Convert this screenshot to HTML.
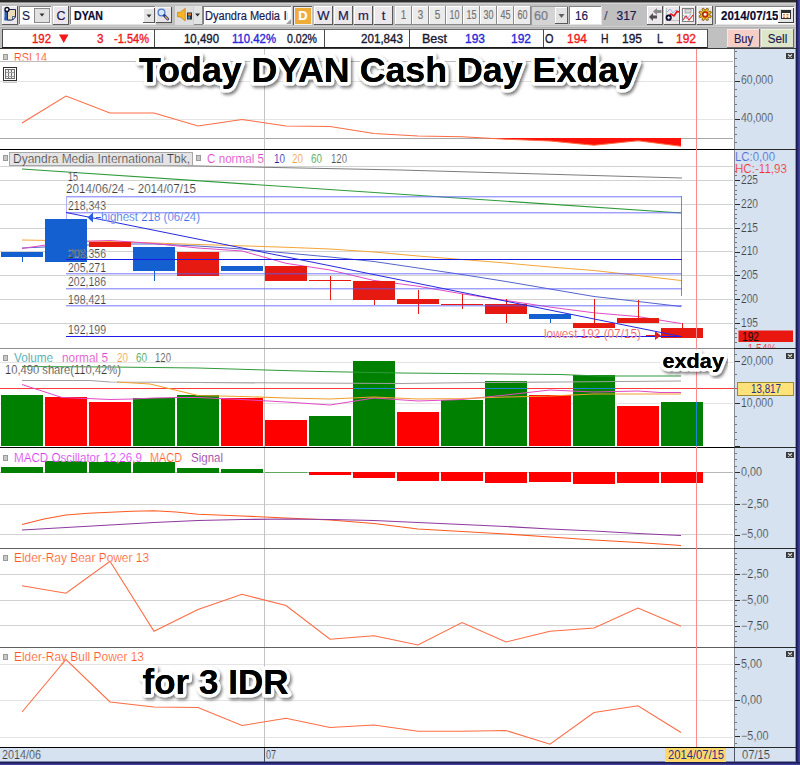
<!DOCTYPE html>
<html><head><meta charset="utf-8"><title>DYAN chart</title>
<style>html,body{margin:0;padding:0;background:#fff}body{width:800px;height:765px;overflow:hidden}svg{display:block;font-family:'Liberation Sans', sans-serif}</style>
</head><body>
<svg width="800" height="765" viewBox="0 0 800 765">
<defs><filter id="sh" x="-5%" y="-20%" width="110%" height="150%"><feDropShadow dx="1.8" dy="2.4" stdDeviation="1.8" flood-color="#000" flood-opacity="0.5"/></filter></defs>
<rect x="0" y="0" width="800" height="765" fill="#ffffff" />
<g shape-rendering="crispEdges">
<rect x="0" y="0" width="800" height="49" fill="#c0c0c0" />
<rect x="0" y="0" width="800" height="2" fill="#2c2c2c" />
<rect x="0" y="2" width="800" height="1" fill="#8a8a8a" />
<rect x="0" y="3" width="800" height="1" fill="#d4d4d4" />
<rect x="0" y="26" width="800" height="1" fill="#d0d0d0" />
<rect x="0" y="27" width="800" height="1" fill="#b0b0b0" />
<rect x="734" y="49" width="62" height="713" fill="#d6e2f0" />
<rect x="0" y="748" width="796" height="14" fill="#d6e2f0" />
<rect x="796" y="0" width="1" height="765" fill="#1a1a4e" />
<rect x="797" y="0" width="1" height="765" fill="#26266c" />
<rect x="798" y="0" width="1" height="765" fill="#343488" />
<rect x="799" y="0" width="1" height="765" fill="#44449c" />
<rect x="0" y="762" width="800" height="1" fill="#1c1c52" />
<rect x="0" y="763" width="800" height="1" fill="#2c2c78" />
<rect x="0" y="764" width="800" height="1" fill="#40409a" />
<rect x="795" y="49" width="1" height="713" fill="#8a94c0" />
<rect x="0" y="761" width="796" height="1" fill="#8088b0" />
<rect x="0" y="61" width="733" height="1" fill="#bdbdbd" />
<rect x="0" y="81" width="733" height="1" fill="#e4e4e4" />
<rect x="0" y="119" width="733" height="1" fill="#e4e4e4" />
<rect x="0" y="138" width="733" height="1" fill="#a8a8a8" />
<rect x="0" y="166" width="733" height="1" fill="#d2d2d2" />
<rect x="0" y="180" width="733" height="1" fill="#d2d2d2" />
<rect x="0" y="204" width="733" height="1" fill="#d2d2d2" />
<rect x="0" y="228" width="733" height="1" fill="#d2d2d2" />
<rect x="0" y="251" width="733" height="1" fill="#d2d2d2" />
<rect x="0" y="275" width="733" height="1" fill="#d2d2d2" />
<rect x="0" y="299" width="733" height="1" fill="#d2d2d2" />
<rect x="0" y="323" width="733" height="1" fill="#d2d2d2" />
<rect x="0" y="362" width="733" height="1" fill="#e4e4e4" />
<rect x="0" y="403" width="733" height="1" fill="#e4e4e4" />
<rect x="0" y="472" width="733" height="1" fill="#b8b8b8" />
<rect x="0" y="504" width="733" height="1" fill="#d2d2d2" />
<rect x="0" y="534" width="733" height="1" fill="#d2d2d2" />
<rect x="0" y="574" width="733" height="1" fill="#d2d2d2" />
<rect x="0" y="600" width="733" height="1" fill="#d2d2d2" />
<rect x="0" y="625" width="733" height="1" fill="#d2d2d2" />
<rect x="0" y="664" width="733" height="1" fill="#e4e4e4" />
<rect x="0" y="700" width="733" height="1" fill="#e4e4e4" />
<rect x="0" y="737" width="733" height="1" fill="#e4e4e4" />
<rect x="264" y="49" width="1" height="713" fill="#c4c4c4" />
</g>
<g shape-rendering="crispEdges">
</g>
<polygon points="484,138 506,139.2 550,141 594,145.2 638,140.8 681,146.2 681,138" fill="#ff1008"/>
<polyline points="22,123 66,96 110,113 154,113 198,126 242,119.5 286,126 330,126.5 374,133.5 418,136 462,136.8 506,139.2 550,141 594,145.2 638,140.8 681,146.2" fill="none" stroke="#ff6c44" stroke-width="1.1" />
<g shape-rendering="crispEdges">
<rect x="0" y="149" width="734" height="1" fill="#000000" />
</g>
<rect x="3" y="54" width="5" height="6" fill="#9a9a9a" />
<rect x="4" y="55" width="3" height="4" fill="#c8c8c8" />
<clipPath id="c1"><rect x="0" y="49" width="200" height="11.5"/></clipPath>
<text x="14" y="62.2" font-size="13.5" fill="#ff4a18" font-weight="normal" text-anchor="start" textLength="33" lengthAdjust="spacingAndGlyphs" clip-path="url(#c1)" stroke="#ffffff" stroke-width="0.18">RSI 14</text>
<rect x="3.5" y="67.5" width="13" height="13" fill="#ffffff" stroke="#303030" stroke-width="1"/>
<rect x="5.5" y="69.5" width="9" height="9" fill="#f0f0f0" stroke="#707070" stroke-width="1"/>
<rect x="8" y="70" width="1" height="8" fill="#707070" />
<rect x="11" y="70" width="1" height="8" fill="#707070" />
<rect x="6" y="72" width="8" height="1" fill="#a0a0a0" />
<rect x="6" y="76" width="8" height="1" fill="#a0a0a0" />
<rect x="3" y="82" width="14" height="1" fill="#c8c8c8" />
<polyline points="22,163.5 200,166 400,170 682,178" fill="none" stroke="#7c7c7c" stroke-width="1" />
<polyline points="22,169 682,213" fill="none" stroke="#2e9a3a" stroke-width="1.1" />
<polyline points="22,240 110,241.5 198,244.5 286,247.2 330,249 374,252 418,256 462,259.5 506,263 550,267 594,270.5 638,275.5 681,280.5" fill="none" stroke="#f4a63a" stroke-width="1.1" />
<polyline points="22,248 66,246 110,244 154,244 198,246 242,249 286,253 330,257 374,261.5 418,268 462,274.5 506,281.5 550,289 594,296.5 638,301.5 681,306.5" fill="none" stroke="#5464cc" stroke-width="1" />
<polyline points="22,248.5 66,242 110,240.5 154,243.5 198,248 242,251 286,263.3 330,270 374,280.5 418,286.2 462,293.8 506,300.5 550,307.1 594,312.8 638,316.6 681,323.5" fill="none" stroke="#e24ac4" stroke-width="1" />
<g shape-rendering="crispEdges">
<rect x="22" y="252" width="1" height="10" fill="#1560d0" />
<rect x="1" y="252" width="42" height="5" fill="#1560d0" />
<rect x="66" y="219" width="1" height="43" fill="#1560d0" />
<rect x="45" y="219" width="42" height="43" fill="#1560d0" />
<rect x="110" y="242" width="1" height="5" fill="#e61a10" />
<rect x="89" y="242" width="42" height="5" fill="#e61a10" />
<rect x="154" y="247" width="1" height="34" fill="#1560d0" />
<rect x="133" y="247" width="42" height="24" fill="#1560d0" />
<rect x="198" y="252" width="1" height="24" fill="#e61a10" />
<rect x="177" y="252" width="42" height="24" fill="#e61a10" />
<rect x="242" y="266" width="1" height="5" fill="#1560d0" />
<rect x="221" y="266" width="42" height="5" fill="#1560d0" />
<rect x="286" y="266" width="1" height="15" fill="#e61a10" />
<rect x="265" y="266" width="42" height="15" fill="#e61a10" />
<rect x="330" y="276" width="1" height="24" fill="#e61a10" />
<rect x="309" y="280" width="42" height="1" fill="#e61a10" />
<rect x="374" y="281" width="1" height="24" fill="#e61a10" />
<rect x="353" y="281" width="42" height="19" fill="#e61a10" />
<rect x="418" y="290" width="1" height="24" fill="#e61a10" />
<rect x="397" y="299" width="42" height="5" fill="#e61a10" />
<rect x="462" y="294" width="1" height="15" fill="#e61a10" />
<rect x="441" y="304" width="42" height="1" fill="#e61a10" />
<rect x="506" y="299" width="1" height="24" fill="#e61a10" />
<rect x="485" y="304" width="42" height="10" fill="#e61a10" />
<rect x="550" y="314" width="1" height="9" fill="#1560d0" />
<rect x="529" y="314" width="42" height="5" fill="#1560d0" />
<rect x="594" y="299" width="1" height="29" fill="#e61a10" />
<rect x="573" y="323" width="42" height="5" fill="#e61a10" />
<rect x="638" y="300" width="1" height="23" fill="#e61a10" />
<rect x="617" y="318" width="42" height="5" fill="#e61a10" />
<rect x="682" y="323" width="1" height="15" fill="#e61a10" />
<rect x="661" y="328" width="42" height="10" fill="#e61a10" />
</g>
<g shape-rendering="crispEdges">
<rect x="66" y="196" width="616" height="1" fill="#5a5afa" fill-opacity="0.58"/>
<rect x="66" y="197" width="616" height="1" fill="#5a5afa" fill-opacity="0.26"/>
<rect x="66" y="212" width="616" height="1" fill="#5a5afa" fill-opacity="0.58"/>
<rect x="66" y="213" width="616" height="1" fill="#5a5afa" fill-opacity="0.26"/>
<rect x="66" y="196" width="1" height="23" fill="#b0b0fc" />
<rect x="681" y="196" width="1" height="100" fill="#7c7cf4" />
<rect x="66" y="259" width="616" height="1" fill="#1c1ce8" />
<rect x="66" y="273" width="616" height="1" fill="#5a5afa" fill-opacity="0.58"/>
<rect x="66" y="274" width="616" height="1" fill="#5a5afa" fill-opacity="0.26"/>
<rect x="66" y="288" width="616" height="1" fill="#5a5afa" fill-opacity="0.58"/>
<rect x="66" y="289" width="616" height="1" fill="#5a5afa" fill-opacity="0.26"/>
<rect x="66" y="305" width="616" height="1" fill="#5a5afa" fill-opacity="0.58"/>
<rect x="66" y="306" width="616" height="1" fill="#5a5afa" fill-opacity="0.26"/>
<rect x="66" y="336" width="616" height="1" fill="#1c1ce8" />
</g>
<polyline points="66,212.5 681,336.5" fill="none" stroke="#2828e0" stroke-width="1" />
<rect x="3" y="155" width="5" height="6" fill="#9a9a9a" />
<rect x="4" y="156" width="3" height="4" fill="#c8c8c8" />
<rect x="9.5" y="152.5" width="183" height="13" fill="#e4e4e4" stroke="#a8a8a8" stroke-width="1"/>
<text x="13" y="163" font-size="12" fill="#3c3c3c" font-weight="normal" text-anchor="start" textLength="177" lengthAdjust="spacingAndGlyphs"  stroke="#ffffff" stroke-width="0.18">Dyandra Media International Tbk,</text>
<rect x="196" y="155" width="5" height="6" fill="#9a9a9a" />
<rect x="197" y="156" width="3" height="4" fill="#c8c8c8" />
<text x="207" y="163" font-size="12" fill="#e040c8" font-weight="normal" text-anchor="start" textLength="57" lengthAdjust="spacingAndGlyphs"  stroke="#ffffff" stroke-width="0.18">C normal 5</text>
<text x="274" y="163" font-size="12" fill="#2828a8" font-weight="normal" text-anchor="start" textLength="11" lengthAdjust="spacingAndGlyphs"  stroke="#ffffff" stroke-width="0.18">10</text>
<text x="292" y="163" font-size="12" fill="#f0a040" font-weight="normal" text-anchor="start" textLength="11" lengthAdjust="spacingAndGlyphs"  stroke="#ffffff" stroke-width="0.18">20</text>
<text x="311" y="163" font-size="12" fill="#30a040" font-weight="normal" text-anchor="start" textLength="11" lengthAdjust="spacingAndGlyphs"  stroke="#ffffff" stroke-width="0.18">60</text>
<text x="331" y="163" font-size="12" fill="#505050" font-weight="normal" text-anchor="start" textLength="16" lengthAdjust="spacingAndGlyphs"  stroke="#ffffff" stroke-width="0.18">120</text>
<text x="68" y="181" font-size="12" fill="#3c3c3c" font-weight="normal" text-anchor="start" textLength="10" lengthAdjust="spacingAndGlyphs"  stroke="#ffffff" stroke-width="0.18">15</text>
<text x="66" y="193" font-size="12" fill="#3c3c3c" font-weight="normal" text-anchor="start" textLength="130" lengthAdjust="spacingAndGlyphs"  stroke="#ffffff" stroke-width="0.18">2014/06/24 ~ 2014/07/15</text>
<text x="68" y="210" font-size="12" fill="#3c3c3c" font-weight="normal" text-anchor="start" textLength="38" lengthAdjust="spacingAndGlyphs"  stroke="#ffffff" stroke-width="0.18">218,343</text>
<text x="68" y="257.5" font-size="12" fill="#3c3c3c" font-weight="normal" text-anchor="start" textLength="38" lengthAdjust="spacingAndGlyphs"  stroke="#ffffff" stroke-width="0.18">208,356</text>
<text x="68" y="271.5" font-size="12" fill="#3c3c3c" font-weight="normal" text-anchor="start" textLength="38" lengthAdjust="spacingAndGlyphs"  stroke="#ffffff" stroke-width="0.18">205,271</text>
<text x="68" y="285.5" font-size="12" fill="#3c3c3c" font-weight="normal" text-anchor="start" textLength="38" lengthAdjust="spacingAndGlyphs"  stroke="#ffffff" stroke-width="0.18">202,186</text>
<text x="68" y="303.5" font-size="12" fill="#3c3c3c" font-weight="normal" text-anchor="start" textLength="38" lengthAdjust="spacingAndGlyphs"  stroke="#ffffff" stroke-width="0.18">198,421</text>
<text x="68" y="334" font-size="12" fill="#3c3c3c" font-weight="normal" text-anchor="start" textLength="38" lengthAdjust="spacingAndGlyphs"  stroke="#ffffff" stroke-width="0.18">192,199</text>
<polygon points="87.5,217.5 93,212.5 93,222.5" fill="#2a5ee0"/>
<rect x="96" y="217" width="5" height="1" fill="#2a5ee0" />
<text x="101" y="221" font-size="12" fill="#3a6ae4" font-weight="normal" text-anchor="start" textLength="99" lengthAdjust="spacingAndGlyphs"  stroke="#ffffff" stroke-width="0.18">highest 218 (06/24)</text>
<text x="544" y="338" font-size="12" fill="#f65252" font-weight="normal" text-anchor="start" textLength="97" lengthAdjust="spacingAndGlyphs"  stroke="#ffffff" stroke-width="0.18">lowest 192 (07/15)</text>
<rect x="646" y="335" width="10" height="1" fill="#e02020" />
<polygon points="661,335.5 655,331 655,340" fill="#e02020"/>
<g shape-rendering="crispEdges">
<rect x="0" y="348" width="734" height="1" fill="#909090" />
<rect x="1" y="395" width="42" height="51" fill="#008000" />
<rect x="45" y="397" width="42" height="49" fill="#ff0000" />
<rect x="89" y="402" width="42" height="44" fill="#ff0000" />
<rect x="133" y="398" width="42" height="48" fill="#008000" />
<rect x="177" y="395" width="42" height="51" fill="#008000" />
<rect x="221" y="398" width="42" height="48" fill="#ff0000" />
<rect x="265" y="420" width="42" height="26" fill="#ff0000" />
<rect x="309" y="416" width="42" height="30" fill="#008000" />
<rect x="353" y="361" width="42" height="85" fill="#008000" />
<rect x="397" y="412" width="42" height="34" fill="#ff0000" />
<rect x="441" y="400" width="42" height="46" fill="#008000" />
<rect x="485" y="381" width="42" height="65" fill="#008000" />
<rect x="529" y="395" width="42" height="51" fill="#ff0000" />
<rect x="573" y="375" width="42" height="71" fill="#008000" />
<rect x="617" y="406" width="42" height="40" fill="#ff0000" />
<rect x="661" y="402" width="42" height="44" fill="#008000" />
</g>
<polyline points="22,366.5 110,367 198,368 265,370 320,371.5 400,373 560,374.5 600,376 681,376" fill="none" stroke="#2e9a3a" stroke-width="1" />
<polyline points="22,380.5 90,380.5 110,382 200,382.5 400,383.5 480,382.5 560,382 681,381" fill="none" stroke="#a0a0a0" stroke-width="1.2" />
<g shape-rendering="crispEdges">
<rect x="0" y="388" width="738" height="1" fill="#ff3a3a" />
<rect x="353" y="388" width="42" height="1" fill="#1888d8" />
<rect x="485" y="388" width="42" height="1" fill="#1888d8" />
<rect x="573" y="388" width="42" height="1" fill="#1888d8" />
</g>
<polyline points="22,384.5 62,397.5 88,398.5 110,399.5 133,399 154,398 176,397.5 198,397.5 242,399.5 286,402 330,405 374,398 418,401 462,399.5 506,395 550,390 594,392 638,391 660,392.5 681,392.5" fill="none" stroke="#e24ac4" stroke-width="1" />
<polyline points="117,382 150,384 175,390 198,395.5 242,396.5 286,398 330,399 374,397 418,399 462,398.5 506,397 550,396 594,394 638,394 681,394" fill="none" stroke="#f0a030" stroke-width="1.1" />
<rect x="3" y="355" width="5" height="6" fill="#9a9a9a" />
<rect x="4" y="356" width="3" height="4" fill="#c8c8c8" />
<text x="14" y="362" font-size="12" fill="#30a0a8" font-weight="normal" text-anchor="start" textLength="39" lengthAdjust="spacingAndGlyphs"  stroke="#ffffff" stroke-width="0.18">Volume</text>
<text x="62" y="362" font-size="12" fill="#e040c8" font-weight="normal" text-anchor="start" textLength="46" lengthAdjust="spacingAndGlyphs"  stroke="#ffffff" stroke-width="0.18">normal 5</text>
<text x="117" y="362" font-size="12" fill="#f0a040" font-weight="normal" text-anchor="start" textLength="11" lengthAdjust="spacingAndGlyphs"  stroke="#ffffff" stroke-width="0.18">20</text>
<text x="136" y="362" font-size="12" fill="#30a040" font-weight="normal" text-anchor="start" textLength="11" lengthAdjust="spacingAndGlyphs"  stroke="#ffffff" stroke-width="0.18">60</text>
<text x="155" y="362" font-size="12" fill="#505050" font-weight="normal" text-anchor="start" textLength="16" lengthAdjust="spacingAndGlyphs"  stroke="#ffffff" stroke-width="0.18">120</text>
<text x="5" y="374" font-size="12" fill="#3c3c3c" font-weight="normal" text-anchor="start" textLength="116" lengthAdjust="spacingAndGlyphs"  stroke="#ffffff" stroke-width="0.18">10,490 share(110,42%)</text>
<g shape-rendering="crispEdges">
<rect x="0" y="447" width="796" height="1" fill="#000000" />
<rect x="1" y="467" width="42" height="6" fill="#008000" />
<rect x="45" y="461" width="42" height="12" fill="#008000" />
<rect x="89" y="462" width="42" height="11" fill="#008000" />
<rect x="133" y="462" width="42" height="11" fill="#008000" />
<rect x="177" y="468" width="42" height="5" fill="#008000" />
<rect x="221" y="469" width="42" height="4" fill="#008000" />
<rect x="265" y="472" width="42" height="1" fill="#60a860" />
<rect x="309" y="472" width="42" height="3" fill="#ff0000" />
<rect x="353" y="472" width="42" height="6" fill="#ff0000" />
<rect x="397" y="472" width="42" height="9" fill="#ff0000" />
<rect x="441" y="472" width="42" height="9" fill="#ff0000" />
<rect x="485" y="472" width="42" height="11" fill="#ff0000" />
<rect x="529" y="472" width="42" height="10" fill="#ff0000" />
<rect x="573" y="472" width="42" height="12" fill="#ff0000" />
<rect x="617" y="472" width="42" height="11" fill="#ff0000" />
<rect x="661" y="472" width="42" height="11" fill="#ff0000" />
</g>
<polyline points="22,524.5 44,519 66,515 88,513.3 110,512.3 132,511.3 154,510.8 176,512 198,514.2 242,516 286,518 330,520 374,523.5 418,529 462,531.5 506,534 550,537 594,540 638,542.5 681,545.5" fill="none" stroke="#ff5a20" stroke-width="1.1" />
<polyline points="22,530 66,527.5 110,525 154,522.5 198,520.5 242,519.5 286,519 330,519.5 374,520.5 418,522.5 462,524.5 506,526.5 550,529 594,531 638,533.5 681,535.5" fill="none" stroke="#8e3a9e" stroke-width="1.1" />
<rect x="3" y="455" width="5" height="6" fill="#9a9a9a" />
<rect x="4" y="456" width="3" height="4" fill="#c8c8c8" />
<text x="14" y="462" font-size="12" fill="#d838f0" font-weight="normal" text-anchor="start" textLength="128" lengthAdjust="spacingAndGlyphs"  stroke="#ffffff" stroke-width="0.18">MACD Oscillator 12,26,9</text>
<text x="150" y="462" font-size="12" fill="#ff5a20" font-weight="normal" text-anchor="start" textLength="32" lengthAdjust="spacingAndGlyphs"  stroke="#ffffff" stroke-width="0.18">MACD</text>
<text x="191" y="462" font-size="12" fill="#902898" font-weight="normal" text-anchor="start" textLength="32" lengthAdjust="spacingAndGlyphs"  stroke="#ffffff" stroke-width="0.18">Signal</text>
<g shape-rendering="crispEdges">
<rect x="0" y="548" width="796" height="1" fill="#606060" />
</g>
<polyline points="22,585.75 66,593.25 110,561.25 154,631.25 198,609.5 242,594.25 286,605.5 330,639.25 374,635.75 418,645 462,622.5 506,642 550,631.25 594,628 638,608 681,626.25" fill="none" stroke="#ff6c44" stroke-width="1.1" />
<rect x="3" y="555" width="5" height="6" fill="#9a9a9a" />
<rect x="4" y="556" width="3" height="4" fill="#c8c8c8" />
<text x="14" y="562" font-size="12" fill="#ff5a28" font-weight="normal" text-anchor="start" textLength="135" lengthAdjust="spacingAndGlyphs"  stroke="#ffffff" stroke-width="0.18">Elder-Ray Bear Power 13</text>
<g shape-rendering="crispEdges">
<rect x="0" y="647" width="796" height="1" fill="#606060" />
</g>
<polyline points="22,712 66,659.5 110,702 154,707 198,707.5 242,725.5 286,718.25 330,727.5 374,725 418,731.25 462,731.25 506,730.5 550,744.25 594,712.5 638,705.75 681,732.5" fill="none" stroke="#ff6c44" stroke-width="1.1" />
<rect x="3" y="654" width="5" height="6" fill="#9a9a9a" />
<rect x="4" y="655" width="3" height="4" fill="#c8c8c8" />
<text x="14" y="661" font-size="12" fill="#ff5a28" font-weight="normal" text-anchor="start" textLength="130" lengthAdjust="spacingAndGlyphs"  stroke="#ffffff" stroke-width="0.18">Elder-Ray Bull Power 13</text>
<g shape-rendering="crispEdges">
<rect x="0" y="747" width="796" height="1" fill="#000000" />
<rect x="696" y="49" width="1" height="698" fill="#ff8a8a" />
<rect x="696" y="402" width="1" height="44" fill="#1888d8" />
</g>
<g shape-rendering="crispEdges">
<rect x="734" y="49" width="1" height="699" fill="#8a8c94" />
<rect x="734" y="149" width="62" height="1" fill="#2a2a2a" />
<rect x="734" y="348" width="62" height="1" fill="#2a2a2a" />
<rect x="734" y="447" width="62" height="1" fill="#2a2a2a" />
<rect x="734" y="548" width="62" height="1" fill="#2a2a2a" />
<rect x="734" y="647" width="62" height="1" fill="#2a2a2a" />
<rect x="734" y="747" width="62" height="1" fill="#2a2a2a" />
<rect x="735" y="51" width="2" height="1" fill="#70747c" />
<rect x="735" y="58" width="2" height="1" fill="#70747c" />
<rect x="735" y="66" width="2" height="1" fill="#70747c" />
<rect x="735" y="73" width="2" height="1" fill="#70747c" />
<rect x="735" y="81" width="5" height="1" fill="#2a2a2a" />
<rect x="735" y="89" width="2" height="1" fill="#70747c" />
<rect x="735" y="96" width="2" height="1" fill="#70747c" />
<rect x="735" y="104" width="2" height="1" fill="#70747c" />
<rect x="735" y="111" width="2" height="1" fill="#70747c" />
<rect x="735" y="119" width="5" height="1" fill="#2a2a2a" />
<rect x="735" y="127" width="2" height="1" fill="#70747c" />
<rect x="735" y="134" width="2" height="1" fill="#70747c" />
<rect x="735" y="142" width="2" height="1" fill="#70747c" />
<rect x="735" y="171" width="2" height="1" fill="#70747c" />
<rect x="735" y="175" width="2" height="1" fill="#70747c" />
<rect x="735" y="180" width="5" height="1" fill="#2a2a2a" />
<rect x="735" y="185" width="2" height="1" fill="#70747c" />
<rect x="735" y="190" width="2" height="1" fill="#70747c" />
<rect x="735" y="194" width="2" height="1" fill="#70747c" />
<rect x="735" y="199" width="2" height="1" fill="#70747c" />
<rect x="735" y="204" width="5" height="1" fill="#2a2a2a" />
<rect x="735" y="209" width="2" height="1" fill="#70747c" />
<rect x="735" y="214" width="2" height="1" fill="#70747c" />
<rect x="735" y="218" width="2" height="1" fill="#70747c" />
<rect x="735" y="223" width="2" height="1" fill="#70747c" />
<rect x="735" y="228" width="5" height="1" fill="#2a2a2a" />
<rect x="735" y="233" width="2" height="1" fill="#70747c" />
<rect x="735" y="237" width="2" height="1" fill="#70747c" />
<rect x="735" y="242" width="2" height="1" fill="#70747c" />
<rect x="735" y="247" width="2" height="1" fill="#70747c" />
<rect x="735" y="252" width="5" height="1" fill="#2a2a2a" />
<rect x="735" y="256" width="2" height="1" fill="#70747c" />
<rect x="735" y="261" width="2" height="1" fill="#70747c" />
<rect x="735" y="266" width="2" height="1" fill="#70747c" />
<rect x="735" y="271" width="2" height="1" fill="#70747c" />
<rect x="735" y="275" width="5" height="1" fill="#2a2a2a" />
<rect x="735" y="280" width="2" height="1" fill="#70747c" />
<rect x="735" y="285" width="2" height="1" fill="#70747c" />
<rect x="735" y="290" width="2" height="1" fill="#70747c" />
<rect x="735" y="294" width="2" height="1" fill="#70747c" />
<rect x="735" y="299" width="5" height="1" fill="#2a2a2a" />
<rect x="735" y="304" width="2" height="1" fill="#70747c" />
<rect x="735" y="309" width="2" height="1" fill="#70747c" />
<rect x="735" y="313" width="2" height="1" fill="#70747c" />
<rect x="735" y="318" width="2" height="1" fill="#70747c" />
<rect x="735" y="323" width="5" height="1" fill="#2a2a2a" />
<rect x="735" y="328" width="2" height="1" fill="#70747c" />
<rect x="735" y="333" width="2" height="1" fill="#70747c" />
<rect x="735" y="337" width="2" height="1" fill="#70747c" />
<rect x="735" y="342" width="2" height="1" fill="#70747c" />
<rect x="735" y="354" width="2" height="1" fill="#70747c" />
<rect x="735" y="374" width="2" height="1" fill="#70747c" />
<rect x="735" y="416" width="2" height="1" fill="#70747c" />
<rect x="735" y="424" width="2" height="1" fill="#70747c" />
<rect x="735" y="432" width="2" height="1" fill="#70747c" />
<rect x="735" y="439" width="2" height="1" fill="#70747c" />
<rect x="735" y="403" width="5" height="1" fill="#2a2a2a" />
<rect x="735" y="361" width="5" height="1" fill="#2a2a2a" />
<rect x="735" y="446" width="5" height="1" fill="#2a2a2a" />
<rect x="735" y="453" width="2" height="1" fill="#70747c" />
<rect x="735" y="459" width="2" height="1" fill="#70747c" />
<rect x="735" y="466" width="2" height="1" fill="#70747c" />
<rect x="735" y="472" width="5" height="1" fill="#2a2a2a" />
<rect x="735" y="478" width="2" height="1" fill="#70747c" />
<rect x="735" y="485" width="2" height="1" fill="#70747c" />
<rect x="735" y="491" width="2" height="1" fill="#70747c" />
<rect x="735" y="497" width="2" height="1" fill="#70747c" />
<rect x="735" y="504" width="5" height="1" fill="#2a2a2a" />
<rect x="735" y="510" width="2" height="1" fill="#70747c" />
<rect x="735" y="516" width="2" height="1" fill="#70747c" />
<rect x="735" y="522" width="2" height="1" fill="#70747c" />
<rect x="735" y="529" width="2" height="1" fill="#70747c" />
<rect x="735" y="535" width="5" height="1" fill="#2a2a2a" />
<rect x="735" y="541" width="2" height="1" fill="#70747c" />
<rect x="735" y="553" width="2" height="1" fill="#70747c" />
<rect x="735" y="558" width="2" height="1" fill="#70747c" />
<rect x="735" y="564" width="2" height="1" fill="#70747c" />
<rect x="735" y="569" width="2" height="1" fill="#70747c" />
<rect x="735" y="574" width="5" height="1" fill="#2a2a2a" />
<rect x="735" y="579" width="2" height="1" fill="#70747c" />
<rect x="735" y="584" width="2" height="1" fill="#70747c" />
<rect x="735" y="590" width="2" height="1" fill="#70747c" />
<rect x="735" y="595" width="2" height="1" fill="#70747c" />
<rect x="735" y="600" width="5" height="1" fill="#2a2a2a" />
<rect x="735" y="605" width="2" height="1" fill="#70747c" />
<rect x="735" y="610" width="2" height="1" fill="#70747c" />
<rect x="735" y="615" width="2" height="1" fill="#70747c" />
<rect x="735" y="621" width="2" height="1" fill="#70747c" />
<rect x="735" y="626" width="5" height="1" fill="#2a2a2a" />
<rect x="735" y="631" width="2" height="1" fill="#70747c" />
<rect x="735" y="636" width="2" height="1" fill="#70747c" />
<rect x="735" y="641" width="2" height="1" fill="#70747c" />
<rect x="735" y="657" width="2" height="1" fill="#70747c" />
<rect x="735" y="664" width="5" height="1" fill="#2a2a2a" />
<rect x="735" y="671" width="2" height="1" fill="#70747c" />
<rect x="735" y="678" width="2" height="1" fill="#70747c" />
<rect x="735" y="686" width="2" height="1" fill="#70747c" />
<rect x="735" y="693" width="2" height="1" fill="#70747c" />
<rect x="735" y="700" width="5" height="1" fill="#2a2a2a" />
<rect x="735" y="707" width="2" height="1" fill="#70747c" />
<rect x="735" y="714" width="2" height="1" fill="#70747c" />
<rect x="735" y="722" width="2" height="1" fill="#70747c" />
<rect x="735" y="729" width="2" height="1" fill="#70747c" />
<rect x="735" y="736" width="5" height="1" fill="#2a2a2a" />
<rect x="735" y="743" width="2" height="1" fill="#70747c" />
</g>
<text x="741" y="84" font-size="12" fill="#444444" font-weight="normal" text-anchor="start" textLength="32" lengthAdjust="spacingAndGlyphs"  stroke="#d6e2f0" stroke-width="0.18">60,000</text>
<text x="741" y="122" font-size="12" fill="#444444" font-weight="normal" text-anchor="start" textLength="32" lengthAdjust="spacingAndGlyphs"  stroke="#d6e2f0" stroke-width="0.18">40,000</text>
<text x="741" y="184" font-size="12" fill="#444444" font-weight="normal" text-anchor="start" textLength="17" lengthAdjust="spacingAndGlyphs"  stroke="#d6e2f0" stroke-width="0.18">225</text>
<text x="741" y="208" font-size="12" fill="#444444" font-weight="normal" text-anchor="start" textLength="17" lengthAdjust="spacingAndGlyphs"  stroke="#d6e2f0" stroke-width="0.18">220</text>
<text x="741" y="232" font-size="12" fill="#444444" font-weight="normal" text-anchor="start" textLength="17" lengthAdjust="spacingAndGlyphs"  stroke="#d6e2f0" stroke-width="0.18">215</text>
<text x="741" y="255" font-size="12" fill="#444444" font-weight="normal" text-anchor="start" textLength="17" lengthAdjust="spacingAndGlyphs"  stroke="#d6e2f0" stroke-width="0.18">210</text>
<text x="741" y="279" font-size="12" fill="#444444" font-weight="normal" text-anchor="start" textLength="17" lengthAdjust="spacingAndGlyphs"  stroke="#d6e2f0" stroke-width="0.18">205</text>
<text x="741" y="303" font-size="12" fill="#444444" font-weight="normal" text-anchor="start" textLength="17" lengthAdjust="spacingAndGlyphs"  stroke="#d6e2f0" stroke-width="0.18">200</text>
<text x="741" y="327" font-size="12" fill="#444444" font-weight="normal" text-anchor="start" textLength="17" lengthAdjust="spacingAndGlyphs"  stroke="#d6e2f0" stroke-width="0.18">195</text>
<text x="741" y="365" font-size="12" fill="#444444" font-weight="normal" text-anchor="start" textLength="32" lengthAdjust="spacingAndGlyphs"  stroke="#d6e2f0" stroke-width="0.18">20,000</text>
<text x="741" y="407" font-size="12" fill="#444444" font-weight="normal" text-anchor="start" textLength="32" lengthAdjust="spacingAndGlyphs"  stroke="#d6e2f0" stroke-width="0.18">10,000</text>
<text x="741" y="476" font-size="12" fill="#444444" font-weight="normal" text-anchor="start" textLength="21" lengthAdjust="spacingAndGlyphs"  stroke="#d6e2f0" stroke-width="0.18">0,00</text>
<text x="741" y="508" font-size="12" fill="#444444" font-weight="normal" text-anchor="start" textLength="27.5" lengthAdjust="spacingAndGlyphs"  stroke="#d6e2f0" stroke-width="0.18">−2,50</text>
<text x="741" y="538" font-size="12" fill="#444444" font-weight="normal" text-anchor="start" textLength="27.5" lengthAdjust="spacingAndGlyphs"  stroke="#d6e2f0" stroke-width="0.18">−5,00</text>
<text x="741" y="578" font-size="12" fill="#444444" font-weight="normal" text-anchor="start" textLength="27.5" lengthAdjust="spacingAndGlyphs"  stroke="#d6e2f0" stroke-width="0.18">−2,50</text>
<text x="741" y="604" font-size="12" fill="#444444" font-weight="normal" text-anchor="start" textLength="27.5" lengthAdjust="spacingAndGlyphs"  stroke="#d6e2f0" stroke-width="0.18">−5,00</text>
<text x="741" y="630" font-size="12" fill="#444444" font-weight="normal" text-anchor="start" textLength="27.5" lengthAdjust="spacingAndGlyphs"  stroke="#d6e2f0" stroke-width="0.18">−7,50</text>
<text x="741" y="668" font-size="12" fill="#444444" font-weight="normal" text-anchor="start" textLength="21" lengthAdjust="spacingAndGlyphs"  stroke="#d6e2f0" stroke-width="0.18">5,00</text>
<text x="741" y="704" font-size="12" fill="#444444" font-weight="normal" text-anchor="start" textLength="21" lengthAdjust="spacingAndGlyphs"  stroke="#d6e2f0" stroke-width="0.18">0,00</text>
<text x="741" y="740" font-size="12" fill="#444444" font-weight="normal" text-anchor="start" textLength="27.5" lengthAdjust="spacingAndGlyphs"  stroke="#d6e2f0" stroke-width="0.18">−5,00</text>
<text x="735" y="161" font-size="12" fill="#4a6ad8" font-weight="normal" text-anchor="start" textLength="40" lengthAdjust="spacingAndGlyphs"  stroke="#d6e2f0" stroke-width="0.18">LC:0,00</text>
<text x="735" y="173" font-size="12" fill="#f03030" font-weight="normal" text-anchor="start" textLength="52" lengthAdjust="spacingAndGlyphs"  stroke="#d6e2f0" stroke-width="0.18">HC:-11,93</text>
<clipPath id="c2"><rect x="734" y="150" width="62" height="198"/></clipPath>
<rect x="738.5" y="330.5" width="54.5" height="11.5" fill="#e81810" />
<text x="742" y="341" font-size="12" fill="#101010" font-weight="normal" text-anchor="start" textLength="17" lengthAdjust="spacingAndGlyphs" >192</text>
<text x="741.5" y="352.5" font-size="12" fill="#f03030" font-weight="normal" text-anchor="start" textLength="35" lengthAdjust="spacingAndGlyphs" clip-path="url(#c2)" stroke="#d6e2f0" stroke-width="0.18">−1,54%</text>
<rect x="737.5" y="382.5" width="56" height="13" fill="#ffe27a" stroke="#a08a30" stroke-width="1"/>
<text x="751" y="392.5" font-size="12" fill="#28308a" font-weight="normal" text-anchor="start" textLength="30" lengthAdjust="spacingAndGlyphs" >13,817</text>
<rect x="786" y="53" width="8" height="6" fill="#3a3a3a" />
<path d="M788 54.5 L792 57.5 M792 54.5 L788 57.5" stroke="#e8e8e8" stroke-width="1.2" fill="none"/>
<rect x="786" y="353" width="8" height="6" fill="#3a3a3a" />
<path d="M788 354.5 L792 357.5 M792 354.5 L788 357.5" stroke="#e8e8e8" stroke-width="1.2" fill="none"/>
<rect x="786" y="452" width="8" height="6" fill="#3a3a3a" />
<path d="M788 453.5 L792 456.5 M792 453.5 L788 456.5" stroke="#e8e8e8" stroke-width="1.2" fill="none"/>
<rect x="786" y="552" width="8" height="6" fill="#3a3a3a" />
<path d="M788 553.5 L792 556.5 M792 553.5 L788 556.5" stroke="#e8e8e8" stroke-width="1.2" fill="none"/>
<rect x="786" y="651" width="8" height="6" fill="#3a3a3a" />
<path d="M788 652.5 L792 655.5 M792 652.5 L788 655.5" stroke="#e8e8e8" stroke-width="1.2" fill="none"/>
<g shape-rendering="crispEdges">
<rect x="264" y="748" width="1" height="14" fill="#4a5264" />
<rect x="734" y="748" width="1" height="14" fill="#50586a" />
</g>
<text x="2" y="759" font-size="12" fill="#3c3c3c" font-weight="normal" text-anchor="start" textLength="39" lengthAdjust="spacingAndGlyphs"  stroke="#d6e2f0" stroke-width="0.18">2014/06</text>
<text x="266" y="759" font-size="12" fill="#3c3c3c" font-weight="normal" text-anchor="start" textLength="10" lengthAdjust="spacingAndGlyphs"  stroke="#d6e2f0" stroke-width="0.18">07</text>
<rect x="665" y="748" width="61" height="14" fill="#ffd86a" />
<text x="668" y="759" font-size="12" fill="#28308a" font-weight="normal" text-anchor="start" textLength="56" lengthAdjust="spacingAndGlyphs" >2014/07/15</text>
<text x="742" y="759" font-size="12" fill="#3c3c3c" font-weight="normal" text-anchor="start" textLength="28" lengthAdjust="spacingAndGlyphs"  stroke="#d6e2f0" stroke-width="0.18">07/15</text>
<g filter="url(#sh)"><text x="139" y="82" font-size="35" font-weight="bold" fill="#000" stroke="#fff" stroke-width="6.8" stroke-linejoin="round" paint-order="stroke" textLength="499" lengthAdjust="spacingAndGlyphs">Today DYAN Cash Day Exday</text></g>
<text x="139" y="82" font-size="35" font-weight="bold" fill="#000" textLength="499" lengthAdjust="spacingAndGlyphs">Today DYAN Cash Day Exday</text>
<g filter="url(#sh)"><text x="662.5" y="367.5" font-size="21" font-weight="bold" fill="#000" stroke="#fff" stroke-width="6.8" stroke-linejoin="round" paint-order="stroke" textLength="61.5" lengthAdjust="spacingAndGlyphs">exday</text></g>
<text x="662.5" y="367.5" font-size="21" font-weight="bold" fill="#000" textLength="61.5" lengthAdjust="spacingAndGlyphs">exday</text>
<g filter="url(#sh)"><text x="142.5" y="693.5" font-size="35" font-weight="bold" fill="#000" stroke="#fff" stroke-width="6.8" stroke-linejoin="round" paint-order="stroke" textLength="146" lengthAdjust="spacingAndGlyphs">for 3 IDR</text></g>
<text x="142.5" y="693.5" font-size="35" font-weight="bold" fill="#000" textLength="146" lengthAdjust="spacingAndGlyphs">for 3 IDR</text>
<g shape-rendering="crispEdges">
<rect x="2" y="6" width="16" height="19" fill="#ebe7eb" />
<rect x="2" y="6" width="16" height="1" fill="#ffffff" />
<rect x="2" y="6" width="1" height="19" fill="#ffffff" />
<rect x="2" y="24" width="16" height="1" fill="#5a5a5a" />
<rect x="17" y="6" width="1" height="19" fill="#5a5a5a" />
</g>
<path d="M4.5 10 h3 v10 h-3z" fill="#2a5cb4"/><path d="M4.5 17.5 h8 l-2 3 h-6z" fill="#2a5cb4"/><path d="M7.5 9.5 h8 v7.5 l-3 3 h-5z" fill="#eedcb8" stroke="#1a2a60" stroke-width="1"/><path d="M15.5 16.5 h-3 v3.5z" fill="#f8f8ff" stroke="#1a2a60" stroke-width="0.7"/><circle cx="7" cy="9.5" r="2" fill="#fff" stroke="#0a0a20" stroke-width="1.3"/>
<g shape-rendering="crispEdges">
<rect x="19" y="6" width="33" height="19" fill="#ffffff" />
<rect x="19" y="6" width="33" height="1" fill="#808080" />
<rect x="19" y="6" width="1" height="19" fill="#808080" />
<rect x="19" y="24" width="33" height="1" fill="#e4e4e4" />
<rect x="51" y="6" width="1" height="19" fill="#e4e4e4" />
</g>
<text x="22" y="20" font-size="13" fill="#1a1a50" font-weight="normal" text-anchor="start" textLength="8" lengthAdjust="spacingAndGlyphs"  stroke="#1a1a50" stroke-width="0.2">S</text>
<rect x="34.5" y="8.5" width="15" height="14" fill="#e2e2e2" stroke="#8a8a8a" stroke-width="1"/>
<polygon points="39.5,13.5 44.5,13.5 42,16.5" fill="#303030"/>
<g shape-rendering="crispEdges">
<rect x="53" y="6" width="16" height="19" fill="#ebe7eb" />
<rect x="53" y="6" width="16" height="1" fill="#ffffff" />
<rect x="53" y="6" width="1" height="19" fill="#ffffff" />
<rect x="53" y="24" width="16" height="1" fill="#5a5a5a" />
<rect x="68" y="6" width="1" height="19" fill="#5a5a5a" />
</g>
<text x="56.5" y="20" font-size="13" fill="#1a1a50" font-weight="normal" text-anchor="start" textLength="9" lengthAdjust="spacingAndGlyphs"  stroke="#1a1a50" stroke-width="0.2">C</text>
<g shape-rendering="crispEdges">
<rect x="70" y="6" width="86" height="19" fill="#ffffff" />
<rect x="70" y="6" width="86" height="1" fill="#808080" />
<rect x="70" y="6" width="1" height="19" fill="#808080" />
<rect x="70" y="24" width="86" height="1" fill="#e4e4e4" />
<rect x="155" y="6" width="1" height="19" fill="#e4e4e4" />
</g>
<text x="74" y="20" font-size="12" fill="#0a0a30" font-weight="bold" text-anchor="start" textLength="29" lengthAdjust="spacingAndGlyphs"  stroke="#0a0a30" stroke-width="0.2">DYAN</text>
<g shape-rendering="crispEdges">
<rect x="143" y="8" width="12" height="15" fill="#e6e6e6" />
<rect x="143" y="8" width="12" height="1" fill="#ffffff" />
<rect x="143" y="8" width="1" height="15" fill="#ffffff" />
<rect x="143" y="22" width="12" height="1" fill="#5a5a5a" />
<rect x="154" y="8" width="1" height="15" fill="#5a5a5a" />
</g>
<polygon points="146.5,14.5 151.5,14.5 149,17.5" fill="#303030"/>
<g shape-rendering="crispEdges">
<rect x="156" y="7" width="16" height="16" fill="#e6e4e6" />
<rect x="156" y="7" width="16" height="1" fill="#f4f4f4" />
<rect x="156" y="7" width="1" height="16" fill="#f4f4f4" />
<rect x="156" y="22" width="16" height="1" fill="#505050" />
<rect x="171" y="7" width="1" height="16" fill="#505050" />
</g>
<circle cx="161.5" cy="12.5" r="3.4" fill="#d6e6fa" stroke="#4a78c8" stroke-width="1.2"/><path d="M164.3 15.4 L167.8 19" stroke="#28408a" stroke-width="2.8" stroke-linecap="round"/><path d="M165.6 16.8 L167.8 19" stroke="#e8a030" stroke-width="1.3" stroke-linecap="round"/>
<g shape-rendering="crispEdges">
<rect x="175" y="6" width="19" height="19" fill="#dedede" />
<rect x="194" y="6" width="9" height="19" fill="#e4e4e4" />
<rect x="202" y="6" width="1" height="19" fill="#8a8a8a" />
<rect x="194" y="24" width="9" height="1" fill="#8a8a8a" />
<rect x="193" y="6" width="1" height="19" fill="#d0d0d0" />
</g>
<path d="M177.5 12.3 h2.7 l5 -4 v12.6 l-5 -4 h-2.7z" fill="#f6b428" stroke="#c08410" stroke-width="0.7"/>
<rect x="187" y="12.5" width="5" height="7" fill="#2c2c34" />
<rect x="188" y="13.5" width="3" height="2" fill="#e8842c" />
<rect x="188" y="16.5" width="2" height="2" fill="#3a9ae8" />
<polygon points="195.0,13.5 200.0,13.5 197.5,16.5" fill="#303030"/>
<g shape-rendering="crispEdges">
<rect x="203" y="6" width="89" height="19" fill="#ffffff" />
<rect x="203" y="6" width="89" height="1" fill="#808080" />
<rect x="203" y="6" width="1" height="19" fill="#808080" />
<rect x="203" y="24" width="89" height="1" fill="#e4e4e4" />
<rect x="291" y="6" width="1" height="19" fill="#e4e4e4" />
</g>
<clipPath id="c3"><rect x="203" y="7" width="84.5" height="17"/></clipPath>
<text x="205" y="20" font-size="12.5" fill="#1a1a50" font-weight="normal" text-anchor="start" textLength="75" lengthAdjust="spacingAndGlyphs"  stroke="#1a1a50" stroke-width="0.2">Dyandra Media</text>
<text x="283.5" y="20" font-size="12.5" fill="#1a1a50" font-weight="normal" text-anchor="start" clip-path="url(#c3)" stroke="#1a1a50" stroke-width="0.2">International</text>
<polygon points="291,19 291,24 286,24" fill="#a0a0a0"/>
<g shape-rendering="crispEdges">
<rect x="293" y="6" width="19" height="19" fill="#f0f0f0" />
<rect x="293" y="6" width="19" height="1" fill="#5a5a5a" />
<rect x="293" y="6" width="1" height="19" fill="#5a5a5a" />
<rect x="295" y="8" width="16" height="16" fill="#f0ac38" />
</g>
<text x="303" y="20" font-size="13" fill="#ffffff" font-weight="bold" text-anchor="middle"  stroke="#ffffff" stroke-width="0.2">D</text>
<g shape-rendering="crispEdges">
<rect x="314" y="6" width="19" height="19" fill="#ebe7eb" />
<rect x="314" y="6" width="19" height="1" fill="#ffffff" />
<rect x="314" y="6" width="1" height="19" fill="#ffffff" />
<rect x="314" y="24" width="19" height="1" fill="#5a5a5a" />
<rect x="332" y="6" width="1" height="19" fill="#5a5a5a" />
</g>
<text x="323.5" y="20" font-size="13" fill="#1a1a50" font-weight="normal" text-anchor="middle"  stroke="#1a1a50" stroke-width="0.2">W</text>
<g shape-rendering="crispEdges">
<rect x="334" y="6" width="19" height="19" fill="#ebe7eb" />
<rect x="334" y="6" width="19" height="1" fill="#ffffff" />
<rect x="334" y="6" width="1" height="19" fill="#ffffff" />
<rect x="334" y="24" width="19" height="1" fill="#5a5a5a" />
<rect x="352" y="6" width="1" height="19" fill="#5a5a5a" />
</g>
<text x="343.5" y="20" font-size="13" fill="#1a1a50" font-weight="normal" text-anchor="middle"  stroke="#1a1a50" stroke-width="0.2">M</text>
<g shape-rendering="crispEdges">
<rect x="354" y="6" width="19" height="19" fill="#ebe7eb" />
<rect x="354" y="6" width="19" height="1" fill="#ffffff" />
<rect x="354" y="6" width="1" height="19" fill="#ffffff" />
<rect x="354" y="24" width="19" height="1" fill="#5a5a5a" />
<rect x="372" y="6" width="1" height="19" fill="#5a5a5a" />
</g>
<text x="363.5" y="20" font-size="13" fill="#1a1a50" font-weight="normal" text-anchor="middle"  stroke="#1a1a50" stroke-width="0.2">m</text>
<g shape-rendering="crispEdges">
<rect x="374" y="6" width="19" height="19" fill="#ebe7eb" />
<rect x="374" y="6" width="19" height="1" fill="#ffffff" />
<rect x="374" y="6" width="1" height="19" fill="#ffffff" />
<rect x="374" y="24" width="19" height="1" fill="#5a5a5a" />
<rect x="392" y="6" width="1" height="19" fill="#5a5a5a" />
</g>
<text x="383.5" y="20" font-size="13" fill="#1a1a50" font-weight="normal" text-anchor="middle"  stroke="#1a1a50" stroke-width="0.2">t</text>
<g shape-rendering="crispEdges">
<rect x="395" y="6" width="17" height="19" fill="#ebebeb" />
<rect x="395" y="6" width="17" height="1" fill="#ffffff" />
<rect x="395" y="6" width="1" height="19" fill="#ffffff" />
<rect x="395" y="24" width="17" height="1" fill="#8a8a8a" />
<rect x="411" y="6" width="1" height="19" fill="#8a8a8a" />
</g>
<text x="403.5" y="19" font-size="12" fill="#747474" font-weight="normal" text-anchor="middle" textLength="5.5" lengthAdjust="spacingAndGlyphs"  stroke="#747474" stroke-width="0.2">1</text>
<g shape-rendering="crispEdges">
<rect x="412" y="6" width="17" height="19" fill="#ebebeb" />
<rect x="412" y="6" width="17" height="1" fill="#ffffff" />
<rect x="412" y="6" width="1" height="19" fill="#ffffff" />
<rect x="412" y="24" width="17" height="1" fill="#8a8a8a" />
<rect x="428" y="6" width="1" height="19" fill="#8a8a8a" />
</g>
<text x="420.5" y="19" font-size="12" fill="#747474" font-weight="normal" text-anchor="middle" textLength="5.5" lengthAdjust="spacingAndGlyphs"  stroke="#747474" stroke-width="0.2">3</text>
<g shape-rendering="crispEdges">
<rect x="429" y="6" width="17" height="19" fill="#ebebeb" />
<rect x="429" y="6" width="17" height="1" fill="#ffffff" />
<rect x="429" y="6" width="1" height="19" fill="#ffffff" />
<rect x="429" y="24" width="17" height="1" fill="#8a8a8a" />
<rect x="445" y="6" width="1" height="19" fill="#8a8a8a" />
</g>
<text x="437.5" y="19" font-size="12" fill="#747474" font-weight="normal" text-anchor="middle" textLength="5.5" lengthAdjust="spacingAndGlyphs"  stroke="#747474" stroke-width="0.2">5</text>
<g shape-rendering="crispEdges">
<rect x="446" y="6" width="17" height="19" fill="#ebebeb" />
<rect x="446" y="6" width="17" height="1" fill="#ffffff" />
<rect x="446" y="6" width="1" height="19" fill="#ffffff" />
<rect x="446" y="24" width="17" height="1" fill="#8a8a8a" />
<rect x="462" y="6" width="1" height="19" fill="#8a8a8a" />
</g>
<text x="454.5" y="19" font-size="12" fill="#747474" font-weight="normal" text-anchor="middle" textLength="10" lengthAdjust="spacingAndGlyphs"  stroke="#747474" stroke-width="0.2">10</text>
<g shape-rendering="crispEdges">
<rect x="463" y="6" width="17" height="19" fill="#ebebeb" />
<rect x="463" y="6" width="17" height="1" fill="#ffffff" />
<rect x="463" y="6" width="1" height="19" fill="#ffffff" />
<rect x="463" y="24" width="17" height="1" fill="#8a8a8a" />
<rect x="479" y="6" width="1" height="19" fill="#8a8a8a" />
</g>
<text x="471.5" y="19" font-size="12" fill="#747474" font-weight="normal" text-anchor="middle" textLength="10" lengthAdjust="spacingAndGlyphs"  stroke="#747474" stroke-width="0.2">15</text>
<g shape-rendering="crispEdges">
<rect x="480" y="6" width="17" height="19" fill="#ebebeb" />
<rect x="480" y="6" width="17" height="1" fill="#ffffff" />
<rect x="480" y="6" width="1" height="19" fill="#ffffff" />
<rect x="480" y="24" width="17" height="1" fill="#8a8a8a" />
<rect x="496" y="6" width="1" height="19" fill="#8a8a8a" />
</g>
<text x="488.5" y="19" font-size="12" fill="#747474" font-weight="normal" text-anchor="middle" textLength="10" lengthAdjust="spacingAndGlyphs"  stroke="#747474" stroke-width="0.2">30</text>
<g shape-rendering="crispEdges">
<rect x="497" y="6" width="17" height="19" fill="#ebebeb" />
<rect x="497" y="6" width="17" height="1" fill="#ffffff" />
<rect x="497" y="6" width="1" height="19" fill="#ffffff" />
<rect x="497" y="24" width="17" height="1" fill="#8a8a8a" />
<rect x="513" y="6" width="1" height="19" fill="#8a8a8a" />
</g>
<text x="505.5" y="19" font-size="12" fill="#747474" font-weight="normal" text-anchor="middle" textLength="10" lengthAdjust="spacingAndGlyphs"  stroke="#747474" stroke-width="0.2">45</text>
<g shape-rendering="crispEdges">
<rect x="514" y="6" width="17" height="19" fill="#ebebeb" />
<rect x="514" y="6" width="17" height="1" fill="#ffffff" />
<rect x="514" y="6" width="1" height="19" fill="#ffffff" />
<rect x="514" y="24" width="17" height="1" fill="#8a8a8a" />
<rect x="530" y="6" width="1" height="19" fill="#8a8a8a" />
</g>
<text x="522.5" y="19" font-size="12" fill="#747474" font-weight="normal" text-anchor="middle" textLength="10" lengthAdjust="spacingAndGlyphs"  stroke="#747474" stroke-width="0.2">60</text>
<g shape-rendering="crispEdges">
<rect x="531" y="6" width="37" height="19" fill="#d4d4d4" />
<rect x="531" y="6" width="37" height="1" fill="#9a9a9a" />
<rect x="531" y="6" width="1" height="19" fill="#9a9a9a" />
</g>
<text x="534" y="20" font-size="13" fill="#7a7a8a" font-weight="normal" text-anchor="start" textLength="14" lengthAdjust="spacingAndGlyphs"  stroke="#7a7a8a" stroke-width="0.2">60</text>
<g shape-rendering="crispEdges">
<rect x="555" y="7" width="13" height="17" fill="#e2e2e2" />
<rect x="555" y="7" width="13" height="1" fill="#ffffff" />
<rect x="555" y="7" width="1" height="17" fill="#ffffff" />
<rect x="555" y="23" width="13" height="1" fill="#5a5a5a" />
<rect x="567" y="7" width="1" height="17" fill="#5a5a5a" />
</g>
<polygon points="558.5,14.0 564.5,14.0 561.5,18.0" fill="#606060"/>
<g shape-rendering="crispEdges">
<rect x="569" y="6" width="33" height="19" fill="#ffffff" />
<rect x="569" y="6" width="33" height="1" fill="#808080" />
<rect x="569" y="6" width="1" height="19" fill="#808080" />
<rect x="569" y="24" width="33" height="1" fill="#e4e4e4" />
<rect x="601" y="6" width="1" height="19" fill="#e4e4e4" />
</g>
<text x="575" y="20" font-size="13" fill="#1a1a50" font-weight="normal" text-anchor="start" textLength="13" lengthAdjust="spacingAndGlyphs"  stroke="#1a1a50" stroke-width="0.2">16</text>
<text x="604" y="20" font-size="13" fill="#50506a" font-weight="normal" text-anchor="start"  stroke="#50506a" stroke-width="0.2">/</text>
<text x="616.5" y="20" font-size="13" fill="#1a1a50" font-weight="normal" text-anchor="start" textLength="20" lengthAdjust="spacingAndGlyphs"  stroke="#1a1a50" stroke-width="0.2">317</text>
<g shape-rendering="crispEdges">
<rect x="647" y="6" width="16" height="19" fill="#ebe7eb" />
<rect x="647" y="6" width="16" height="1" fill="#ffffff" />
<rect x="647" y="6" width="1" height="19" fill="#ffffff" />
<rect x="647" y="24" width="16" height="1" fill="#5a5a5a" />
<rect x="662" y="6" width="1" height="19" fill="#5a5a5a" />
</g>
<g shape-rendering="crispEdges">
<rect x="664" y="6" width="16" height="19" fill="#ebe7eb" />
<rect x="664" y="6" width="16" height="1" fill="#ffffff" />
<rect x="664" y="6" width="1" height="19" fill="#ffffff" />
<rect x="664" y="24" width="16" height="1" fill="#5a5a5a" />
<rect x="679" y="6" width="1" height="19" fill="#5a5a5a" />
</g>
<g shape-rendering="crispEdges">
<rect x="680" y="6" width="16" height="19" fill="#ebe7eb" />
<rect x="680" y="6" width="16" height="1" fill="#ffffff" />
<rect x="680" y="6" width="1" height="19" fill="#ffffff" />
<rect x="680" y="24" width="16" height="1" fill="#5a5a5a" />
<rect x="695" y="6" width="1" height="19" fill="#5a5a5a" />
</g>
<g shape-rendering="crispEdges">
<rect x="697" y="6" width="16" height="19" fill="#ebe7eb" />
<rect x="697" y="6" width="16" height="1" fill="#ffffff" />
<rect x="697" y="6" width="1" height="19" fill="#ffffff" />
<rect x="697" y="24" width="16" height="1" fill="#5a5a5a" />
<rect x="712" y="6" width="1" height="19" fill="#5a5a5a" />
</g>
<path d="M649 17 l4 -4 v2.5 h4 v3 h-4 v2.5z" fill="#505050"/><path d="M653 11.5 l4 -3.5 v2 h4.5 v3 h-4.5 v2z" fill="#8a8a8a"/>
<path d="M666.5 8 V20.5 H679" fill="none" stroke="#b8b8c0" stroke-width="0.8"/><polyline points="667,12 670,9 673,13 676,10 679,12" fill="none" stroke="#8ab0e8" stroke-width="0.9"/><polyline points="668,17.5 671,14 674,16 677,11.5 679.5,12" fill="none" stroke="#e01818" stroke-width="1.6"/><circle cx="668.7" cy="17.7" r="3.1" fill="#0a0a30"/><path d="M667.2 17.7 h3 M668.7 16.2 v3" stroke="#fff" stroke-width="1.1"/>
<rect x="682.5" y="8.5" width="11" height="13" fill="#f4f4f4" stroke="#808080" stroke-width="1"/><rect x="685" y="9" width="6" height="4" fill="#d8d8d8" stroke="#808080" stroke-width="0.6"/><polyline points="683,20 686,16 689,20 693,15" fill="none" stroke="#e03030" stroke-width="1.2"/><polyline points="683,15 687,19 691,14" fill="none" stroke="#80a0e0" stroke-width="0.8"/>
<path d="M711.42 15.89 L710.66 17.74 L708.92 17.10 L707.90 18.12 L708.54 19.86 L706.69 20.62 L705.92 18.94 L704.48 18.94 L703.71 20.62 L701.86 19.86 L702.50 18.12 L701.48 17.10 L699.74 17.74 L698.98 15.89 L700.66 15.12 L700.66 13.68 L698.98 12.91 L699.74 11.06 L701.48 11.70 L702.50 10.68 L701.86 8.94 L703.71 8.18 L704.48 9.86 L705.92 9.86 L706.69 8.18 L708.54 8.94 L707.90 10.68 L708.92 11.70 L710.66 11.06 L711.42 12.91 L709.74 13.68 L709.74 15.12Z" fill="#f6bc18" stroke="#6a4808" stroke-width="0.7"/><circle cx="705.2" cy="14.4" r="3" fill="#e42818" stroke="#5a2a08" stroke-width="0.6"/><circle cx="705.2" cy="14.4" r="1.4" fill="#fff"/>
<g shape-rendering="crispEdges">
<rect x="715" y="6" width="80" height="19" fill="#ffffff" />
<rect x="715" y="6" width="80" height="1" fill="#808080" />
<rect x="715" y="6" width="1" height="19" fill="#808080" />
<rect x="715" y="24" width="80" height="1" fill="#e4e4e4" />
<rect x="794" y="6" width="1" height="19" fill="#e4e4e4" />
</g>
<clipPath id="c4"><rect x="716" y="7" width="62" height="17"/></clipPath>
<text x="721" y="20" font-size="12.5" fill="#0a0a30" font-weight="bold" text-anchor="start" textLength="57.5" lengthAdjust="spacingAndGlyphs" clip-path="url(#c4)" stroke="#0a0a30" stroke-width="0.2">2014/07/15</text>
<g shape-rendering="crispEdges">
<rect x="778" y="8" width="16" height="15" fill="#e6e6e6" />
<rect x="778" y="8" width="16" height="1" fill="#ffffff" />
<rect x="778" y="8" width="1" height="15" fill="#ffffff" />
<rect x="778" y="22" width="16" height="1" fill="#404040" />
<rect x="793" y="8" width="1" height="15" fill="#404040" />
</g>
<rect x="781.5" y="10.5" width="9" height="8" fill="#fff" stroke="#303030" stroke-width="1"/><rect x="782" y="11" width="8" height="2" fill="#303030"/><rect x="783" y="14" width="2" height="1.5" fill="#e08030"/><rect x="786.5" y="14" width="2" height="1.5" fill="#e08030"/><rect x="783" y="16.5" width="2" height="1.5" fill="#e08030"/><rect x="786.5" y="16.5" width="2" height="1.5" fill="#e08030"/>
<g shape-rendering="crispEdges">
<rect x="2" y="29" width="152" height="19" fill="#ffffff" />
<rect x="2" y="29" width="152" height="1" fill="#6a6a6a" />
<rect x="2" y="29" width="1" height="19" fill="#4a4a4a" />
<rect x="2" y="47" width="152" height="1" fill="#1a1a1a" />
</g>
<g shape-rendering="crispEdges">
<rect x="154" y="29" width="170" height="19" fill="#ffffff" />
<rect x="154" y="29" width="170" height="1" fill="#6a6a6a" />
<rect x="154" y="29" width="1" height="19" fill="#4a4a4a" />
<rect x="154" y="47" width="170" height="1" fill="#1a1a1a" />
</g>
<g shape-rendering="crispEdges">
<rect x="324" y="29" width="85" height="19" fill="#ffffff" />
<rect x="324" y="29" width="85" height="1" fill="#6a6a6a" />
<rect x="324" y="29" width="1" height="19" fill="#4a4a4a" />
<rect x="324" y="47" width="85" height="1" fill="#1a1a1a" />
</g>
<g shape-rendering="crispEdges">
<rect x="409" y="29" width="134" height="19" fill="#ffffff" />
<rect x="409" y="29" width="134" height="1" fill="#6a6a6a" />
<rect x="409" y="29" width="1" height="19" fill="#4a4a4a" />
<rect x="409" y="47" width="134" height="1" fill="#1a1a1a" />
</g>
<g shape-rendering="crispEdges">
<rect x="543" y="29" width="165" height="19" fill="#ffffff" />
<rect x="543" y="29" width="165" height="1" fill="#6a6a6a" />
<rect x="543" y="29" width="1" height="19" fill="#4a4a4a" />
<rect x="543" y="47" width="165" height="1" fill="#1a1a1a" />
</g>
<g shape-rendering="crispEdges">
<rect x="707" y="29" width="1" height="19" fill="#4a4a4a" />
<rect x="0" y="48" width="796" height="1" fill="#3a3a3a" />
</g>
<text x="32" y="42.5" font-size="12.5" fill="#f01818" font-weight="normal" text-anchor="start" textLength="19" lengthAdjust="spacingAndGlyphs"  stroke="#f01818" stroke-width="0.35">192</text>
<polygon points="59,34.5 68.5,34.5 63.75,43" fill="#f01818"/>
<text x="97" y="42.5" font-size="12.5" fill="#f01818" font-weight="normal" text-anchor="start" textLength="6.5" lengthAdjust="spacingAndGlyphs"  stroke="#f01818" stroke-width="0.35">3</text>
<text x="114" y="42.5" font-size="12.5" fill="#f01818" font-weight="normal" text-anchor="start" textLength="35" lengthAdjust="spacingAndGlyphs"  stroke="#f01818" stroke-width="0.35">-1.54%</text>
<text x="184" y="42.5" font-size="12.5" fill="#181830" font-weight="normal" text-anchor="start" textLength="35" lengthAdjust="spacingAndGlyphs"  stroke="#181830" stroke-width="0.35">10,490</text>
<text x="232" y="42.5" font-size="12.5" fill="#2828d8" font-weight="normal" text-anchor="start" textLength="44" lengthAdjust="spacingAndGlyphs"  stroke="#2828d8" stroke-width="0.35">110.42%</text>
<text x="287" y="42.5" font-size="12.5" fill="#181830" font-weight="normal" text-anchor="start" textLength="30" lengthAdjust="spacingAndGlyphs"  stroke="#181830" stroke-width="0.35">0.02%</text>
<text x="361" y="42.5" font-size="12.5" fill="#181830" font-weight="normal" text-anchor="start" textLength="42" lengthAdjust="spacingAndGlyphs"  stroke="#181830" stroke-width="0.35">201,843</text>
<text x="422" y="42.5" font-size="12.5" fill="#181830" font-weight="normal" text-anchor="start" textLength="25" lengthAdjust="spacingAndGlyphs"  stroke="#181830" stroke-width="0.35">Best</text>
<text x="465" y="42.5" font-size="12.5" fill="#2828d8" font-weight="normal" text-anchor="start" textLength="20" lengthAdjust="spacingAndGlyphs"  stroke="#2828d8" stroke-width="0.35">193</text>
<text x="511" y="42.5" font-size="12.5" fill="#2828d8" font-weight="normal" text-anchor="start" textLength="20" lengthAdjust="spacingAndGlyphs"  stroke="#2828d8" stroke-width="0.35">192</text>
<text x="545" y="42.5" font-size="12.5" fill="#181830" font-weight="normal" text-anchor="start" textLength="8.5" lengthAdjust="spacingAndGlyphs"  stroke="#181830" stroke-width="0.35">O</text>
<text x="567" y="42.5" font-size="12.5" fill="#f01818" font-weight="normal" text-anchor="start" textLength="20" lengthAdjust="spacingAndGlyphs"  stroke="#f01818" stroke-width="0.35">194</text>
<text x="601" y="42.5" font-size="12.5" fill="#181830" font-weight="normal" text-anchor="start" textLength="7.5" lengthAdjust="spacingAndGlyphs"  stroke="#181830" stroke-width="0.35">H</text>
<text x="622" y="42.5" font-size="12.5" fill="#181830" font-weight="normal" text-anchor="start" textLength="20" lengthAdjust="spacingAndGlyphs"  stroke="#181830" stroke-width="0.35">195</text>
<text x="657" y="42.5" font-size="12.5" fill="#181830" font-weight="normal" text-anchor="start" textLength="6" lengthAdjust="spacingAndGlyphs"  stroke="#181830" stroke-width="0.35">L</text>
<text x="676" y="42.5" font-size="12.5" fill="#f01818" font-weight="normal" text-anchor="start" textLength="20" lengthAdjust="spacingAndGlyphs"  stroke="#f01818" stroke-width="0.35">192</text>
<g shape-rendering="crispEdges">
<rect x="727" y="29" width="33" height="19" fill="#f6cec8" />
<rect x="727" y="29" width="33" height="1" fill="#fbe6e2" />
<rect x="727" y="29" width="1" height="19" fill="#fbe6e2" />
<rect x="727" y="47" width="33" height="1" fill="#6a6a6a" />
<rect x="759" y="29" width="1" height="19" fill="#6a6a6a" />
</g>
<text x="743.5" y="43" font-size="12.5" fill="#1a1a50" font-weight="normal" text-anchor="middle" textLength="19" lengthAdjust="spacingAndGlyphs"  stroke="#1a1a50" stroke-width="0.15">Buy</text>
<g shape-rendering="crispEdges">
<rect x="761" y="29" width="33" height="19" fill="#dde6c8" />
<rect x="761" y="29" width="33" height="1" fill="#eef2e0" />
<rect x="761" y="29" width="1" height="19" fill="#eef2e0" />
<rect x="761" y="47" width="33" height="1" fill="#6a6a6a" />
<rect x="793" y="29" width="1" height="19" fill="#6a6a6a" />
</g>
<text x="777.5" y="43" font-size="12.5" fill="#1a1a50" font-weight="normal" text-anchor="middle" textLength="19.5" lengthAdjust="spacingAndGlyphs"  stroke="#1a1a50" stroke-width="0.15">Sell</text>
</svg>
</body></html>
